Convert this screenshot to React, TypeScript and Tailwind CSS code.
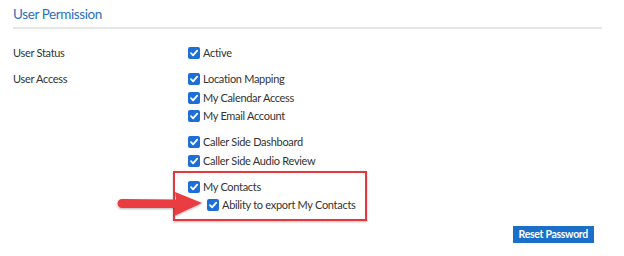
import React from "react";

function Check() {
  return (
    <span className="inline-flex h-[12px] w-[12px] shrink-0 items-center justify-center rounded-[2px] bg-[#1b6fd6]">
      <svg width="10" height="10" viewBox="0 0 10 10">
        <path d="M2 5.2 L4.1 7.3 L8.2 2.6" fill="none" stroke="#fff" strokeWidth="1.8" strokeLinecap="round" strokeLinejoin="round" />
      </svg>
    </span>
  );
}

function Item({ label, indent = false }: { label: string; indent?: boolean }) {
  return (
    <div className={`flex h-[18.5px] items-center gap-[3px] ${indent ? "pl-[19px]" : ""}`}>
      <Check />
      <span>{label}</span>
    </div>
  );
}

export default function App() {
  return (
    <div
      className="relative h-[256px] w-[624px] overflow-hidden bg-white text-[11px] tracking-[-0.3px] text-[#333]"
      style={{ fontFamily: "Lato, 'Liberation Sans', sans-serif" }}
    >
      <div className="px-[13px] pr-[22px]">
        <div className="flex h-[27px] items-end pb-[3px] text-[13.5px] tracking-[-0.4px] text-[#2b6fbe]">User Permission</div>
        <div className="h-[2px] bg-[#e6e6e6]" />
        <div className="mt-[15px] grid grid-cols-[175px_1fr]">
          <div className="flex h-[18.5px] items-center">User Status</div>
          <div>
            <Item label="Active" />
          </div>
          <div className="mt-[7.5px] flex h-[18.5px] items-center">User Access</div>
          <div className="mt-[7.5px] flex flex-col">
            <Item label="Location Mapping" />
            <Item label="My Calendar Access" />
            <Item label="My Email Account" />
            <div className="h-[7.5px]" />
            <Item label="Caller Side Dashboard" />
            <Item label="Caller Side Audio Review" />
            <div className="h-[7.5px]" />
            <Item label="My Contacts" />
            <Item label="Ability to export My Contacts" indent />
          </div>
        </div>
        <div className="mt-[11px] flex justify-end pr-[8px]">
          <button className="h-[17px] bg-[#1a6fc9] px-[6px] text-[10.5px] font-bold leading-[17px] tracking-[-0.3px] text-white">
            Reset Password
          </button>
        </div>
      </div>

      <div className="absolute left-[173px] top-[171px] h-[50px] w-[194px] border-2 border-[#e8373c] shadow-[0_1px_2px_rgba(0,0,0,0.25)]" />
      <svg className="absolute left-[114px] top-[190px]" width="92" height="30" viewBox="0 0 92 30">
        <defs>
          <filter id="s" x="-10%" y="-20%" width="120%" height="150%">
            <feDropShadow dx="0" dy="1" stdDeviation="1" floodColor="#000" floodOpacity="0.3" />
          </filter>
        </defs>
        <g filter="url(#s)">
          <path d="M8 9 L62 9.5 L61 2 L88 13 L60 26 L61 18 L8 18 A4.5 4.5 0 0 1 8 9 Z" fill="#ea3d42" />
        </g>
      </svg>
    </div>
  );
}
